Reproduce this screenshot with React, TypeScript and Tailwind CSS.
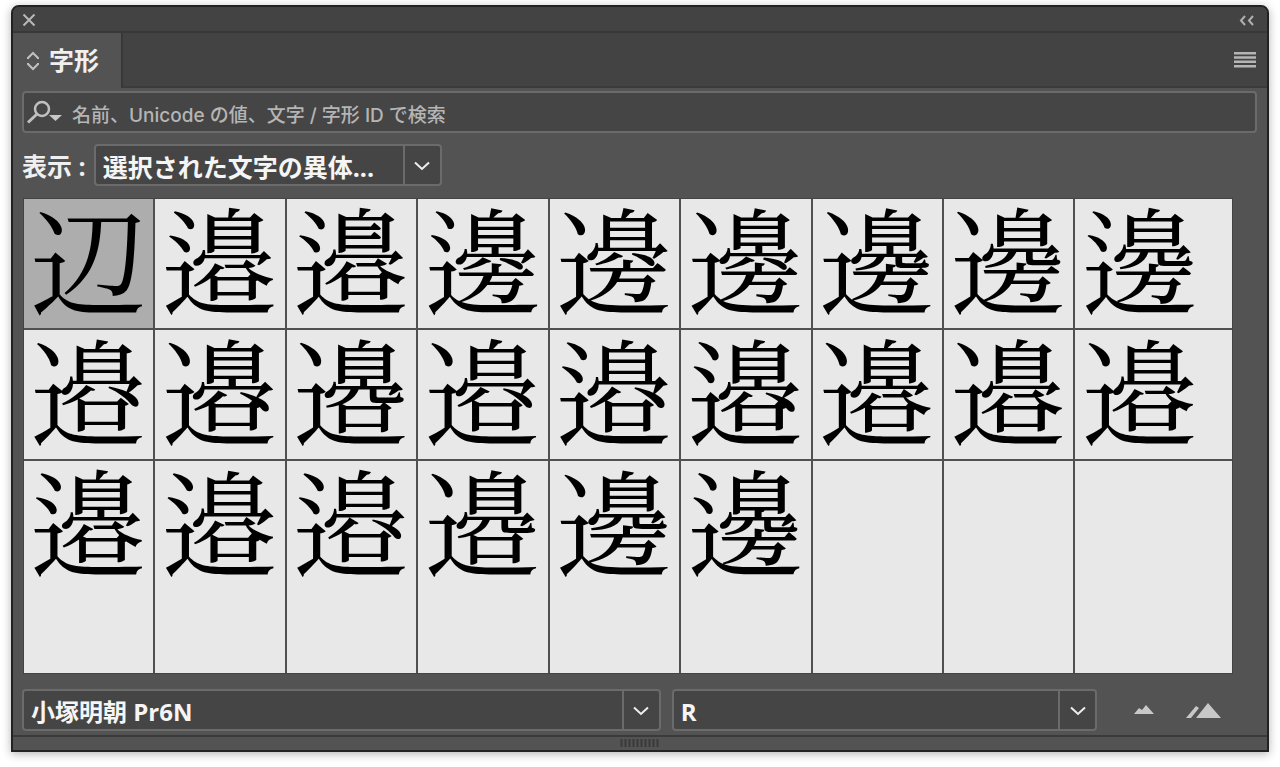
import { useState } from 'react'
import type { SelectHTMLAttributes } from 'react'
import clsx from 'clsx'

// U+9089 and U+908A carry their variants as ideographic variation sequences
const GLYPHS = [
  '辺',
  '\u9089\u{E0100}', '\u9089\u{E0101}', '\u908A\u{E0101}', '\u908A\u{E0102}', '\u908A\u{E0103}', '\u908A\u{E0104}', '\u908A\u{E0105}', '\u908A\u{E0106}',
  '\u9089\u{E0102}', '\u9089\u{E0103}', '\u9089\u{E0104}', '\u9089\u{E0105}', '\u9089\u{E0106}', '\u9089\u{E0107}', '\u9089\u{E0108}', '\u9089\u{E0109}', '\u9089\u{E010A}',
  '\u9089\u{E010B}', '\u9089\u{E010C}', '\u9089\u{E010D}', '\u9089\u{E010E}', '\u908A\u{E0107}', '\u908A\u{E0100}',
]

const CELL_COUNT = 27

function Chevron() {
  return (
    <svg viewBox="0 0 16 10" className="h-[10px] w-4 fill-none stroke-[#eeeeee] stroke-2" aria-hidden="true">
      <path d="M1 1.5 8 8 15 1.5" />
    </svg>
  )
}

interface DropdownProps extends SelectHTMLAttributes<HTMLSelectElement> {
  options: string[]
}

function Dropdown({ options, className, ...props }: DropdownProps) {
  return (
    <div className={clsx('grid h-[42px] rounded border-2 border-[#6b6b6b] bg-[#454545] font-bold', className)}>
      <select
        className="col-start-1 row-start-1 h-full w-full min-w-0 appearance-none bg-transparent pt-[3px] pr-10 pl-[7px] text-[#f5f5f5] outline-none"
        {...props}
      >
        {options.map((option) => (
          <option key={option}>{option}</option>
        ))}
      </select>
      <span className="pointer-events-none col-start-1 row-start-1 flex w-[37px] items-center justify-center justify-self-end border-l-2 border-[#6b6b6b]">
        <Chevron />
      </span>
    </div>
  )
}

export default function App() {
  const [selected, setSelected] = useState(0)
  const [query, setQuery] = useState('')

  return (
    <main className="bg-white px-[11px] pt-[5px] pb-[15px] font-['Open_Sans','Noto_Sans_CJK_JP',sans-serif]">
      <section className="overflow-hidden rounded-t-lg border-2 border-[#222222] bg-[#535353] shadow-[0_2px_10px_rgba(0,0,0,0.3)]">
        <header className="bg-[#434343]">
          <div className="flex h-[26px] items-center justify-between border-b-2 border-[#383838] px-[9px] pt-[2px]">
            <button aria-label="閉じる">
              <svg viewBox="0 0 14 14" className="size-[14px] stroke-[#b8b8b8] stroke-2">
                <path d="M1.5 1.5l11 11M12.5 1.5l-11 11" />
              </svg>
            </button>
            <button aria-label="折りたたむ" className="mr-1">
              <svg viewBox="0 0 15 11" className="h-[11px] w-[15px] fill-none stroke-[#b0b0b0] stroke-2">
                <path d="M6 1 2 5.5 6 10M14 1l-4 4.5 4 4.5" />
              </svg>
            </button>
          </div>
          <div className="flex h-[55px] items-stretch justify-between border-b-2 border-[#3b3b3b]">
            <h1 className="-mb-[2px] flex w-[110px] items-center gap-[10px] border-r-2 border-[#383838] bg-[#535353] pl-[14px] text-[25px] leading-9 font-bold text-[#f0f0f0]">
              <svg viewBox="0 0 12 20" className="h-5 w-3 fill-none stroke-[#c0c0c0] stroke-2" aria-hidden="true">
                <path d="M1 8V7l5-5 5 5v1M1 12v1l5 5 5-5v-1" />
              </svg>
              <span className="pb-[2px]">字形</span>
            </h1>
            <button aria-label="パネルメニュー" className="mr-[11px]">
              <svg viewBox="0 0 22 16" className="h-4 w-[22px] fill-[#b5b5b5]">
                <path d="M0 0h22v2.5H0zM0 4.3h22v2.5H0zM0 8.6h22v2.5H0zM0 13h22v2.5H0z" />
              </svg>
            </button>
          </div>
        </header>

        <div className="pt-[3px] pr-[10px] pb-1 pl-[9px]">
          <label className="flex h-[42px] items-center gap-[10px] rounded border-2 border-[#6b6b6b] bg-[#454545] pl-[2px]">
            <svg viewBox="0 0 36 26" className="h-[26px] w-9 fill-none stroke-[#c0c0c0]" aria-hidden="true">
              <circle cx="16" cy="10" r="7" strokeWidth="2.5" />
              <path d="M11 15 2 23.5" strokeWidth="3" />
              <path d="M23 16h13l-6.5 6z" className="fill-[#c8c8c8] stroke-none" />
            </svg>
            <input
              type="text"
              aria-label="字形を検索"
              value={query}
              onChange={(e) => setQuery(e.target.value)}
              placeholder="名前、Unicode の値、文字 / 字形 ID で検索"
              className="min-w-0 flex-1 bg-transparent pt-2 font-['Inter','Noto_Sans_CJK_JP',sans-serif] text-[19px] leading-7 font-medium text-[#eeeeee] outline-none placeholder:text-[#b5b5b5]"
            />
          </label>

          <div className="mt-[11px] flex items-center gap-2 text-[25px] leading-9">
            <label htmlFor="show" className="pt-[2px] font-bold text-[#f0f0f0]">
              表示 :
            </label>
            <Dropdown id="show" className="w-[348px]" options={['選択された文字の異体...', 'フォント全体を表示']} />
          </div>

          <div className="mt-3 mr-6 ml-px grid grid-cols-[repeat(8,129fr)_156fr] grid-rows-[129px_129px_212px] gap-[2px] border border-[#444444] bg-[#505050]">
            {Array.from({ length: CELL_COUNT }, (_, i) => {
              const glyph = GLYPHS[i]
              if (!glyph) return <div key={i} className="bg-[#e8e8e8]" />
              return (
                <button
                  key={i}
                  onClick={() => setSelected(i)}
                  aria-pressed={selected === i}
                  className={clsx(
                    "flex items-start justify-start pl-[6px] font-['Noto_Serif_CJK_JP','Noto_Sans_CJK_JP',serif] text-[116px] leading-[114px] text-black",
                    selected === i ? 'bg-[#adadad]' : 'bg-[#e8e8e8]'
                  )}
                >
                  {glyph}
                </button>
              )
            })}
          </div>

          <div className="mt-[15px] flex items-center text-2xl leading-9">
            <Dropdown aria-label="フォント" className="mr-[11px] flex-[636]" options={['小塚明朝 Pr6N', '小塚ゴシック Pr6N']} />
            <Dropdown aria-label="スタイル" className="flex-[422]" options={['R', 'EL', 'L', 'M', 'B', 'H']} />
            <button aria-label="縮小" className="mr-[30px] ml-[36px]">
              <svg viewBox="0 0 22 18" className="h-[18px] w-[22px] fill-[#c8c8c8]">
                <path d="M1 13l5-6 3 2 4-5 8 9z" />
              </svg>
            </button>
            <button aria-label="拡大" className="mr-9">
              <svg viewBox="0 0 36 18" className="h-[18px] w-9 fill-[#c8c8c8]">
                <path d="M11 17 23 2l13 15zM1 17 11 5l3 2-8 10z" />
              </svg>
            </button>
          </div>
        </div>

        <footer className="flex h-[15px] items-start justify-center border-t-2 border-[#3a3a3a] pt-[2px]">
          <svg viewBox="0 0 40 8" className="h-2 w-10 stroke-[#3a3a3a]" aria-hidden="true">
            <path d="M1.5 0v8M5.5 0v8M9.5 0v8M13.5 0v8M17.5 0v8M21.5 0v8M25.5 0v8M29.5 0v8M33.5 0v8M37.5 0v8" strokeWidth="2" />
          </svg>
        </footer>
      </section>
    </main>
  )
}
